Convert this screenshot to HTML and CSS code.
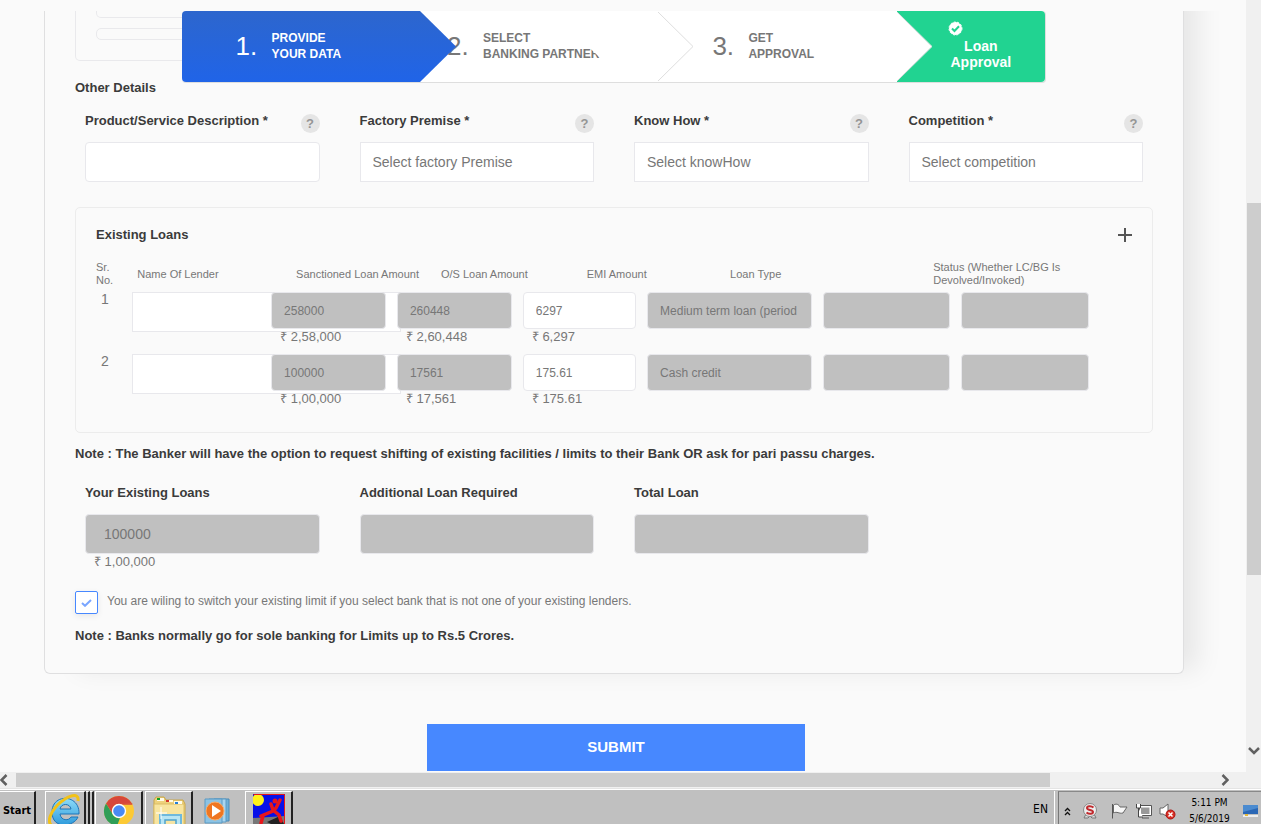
FILE: index.html
```html
<!DOCTYPE html>
<html lang="en">
<head>
<meta charset="utf-8">
<title>Loan Application</title>
<link rel="stylesheet" href="styles.css">
</head>
<body>
<div class="viewport">
  <main class="page">
    <form class="content">
      <div class="card">
        <ol class="stepper">
          <li class="step step-active">
            <span class="step-num">1.</span><span class="step-text">PROVIDE<br>YOUR DATA</span>
            <svg class="arrow" viewBox="0 0 36 71" preserveAspectRatio="none"><defs><linearGradient id="blue" x1="0" y1="0" x2="0" y2="1"><stop offset="0" stop-color="#2d66cd"/><stop offset="1" stop-color="#2064e8"/></linearGradient></defs><path d="M0 0L36 35.500L0 71Z" fill="url(#blue)"/></svg>
          </li>
          <li class="step step-second">
            <span class="step-num">2.</span><span class="step-text clipped">SELECT<br>BANKING PARTNERS</span>
            <svg class="arrow" viewBox="0 0 36 71" preserveAspectRatio="none"><path d="M-1 0L35 35.500L-1 71" fill="#fff" stroke="#dedede"/></svg>
          </li>
          <li class="step step-third">
            <span class="step-num">3.</span><span class="step-text">GET<br>APPROVAL</span>
            <svg class="arrow" viewBox="0 0 36 71" preserveAspectRatio="none"><path d="M-1 0L35 35.500L-1 71" fill="#fff" stroke="#dcdcdc"/></svg>
          </li>
          <li class="step-final">
            <svg class="done" width="15" height="15" viewBox="0 0 15 15"><circle cx="7.500" cy="7.500" r="6.500" fill="#fff" stroke="#fff" stroke-dasharray="2 1.500"/><path d="M4 7.500L6.500 10L11 5.300" fill="none" stroke="#21d391" stroke-width="2"/></svg>
            <span>Loan<br>Approval</span>
          </li>
        </ol>

        <div class="previous"><div class="prev-box prev-first"></div><div class="prev-box"></div></div>
        <h2 class="heading other">Other Details</h2>

        <div class="fields">
          <div class="field">
            <div class="field-head"><label for="product">Product/Service Description *</label><button type="button" class="help" aria-label="Help">?</button></div>
            <input id="product" class="control rounded" type="text">
          </div>
          <div class="field">
            <div class="field-head"><label for="premise">Factory Premise *</label><button type="button" class="help" aria-label="Help">?</button></div>
            <select id="premise" class="control"><option>Select factory Premise</option></select>
          </div>
          <div class="field">
            <div class="field-head"><label for="knowhow">Know How *</label><button type="button" class="help" aria-label="Help">?</button></div>
            <select id="knowhow" class="control"><option>Select knowHow</option></select>
          </div>
          <div class="field">
            <div class="field-head"><label for="competition">Competition *</label><button type="button" class="help" aria-label="Help">?</button></div>
            <select id="competition" class="control"><option>Select competition</option></select>
          </div>
        </div>

        <section class="loans">
          <div class="loans-head">
            <h2 class="heading">Existing Loans</h2>
            <button type="button" class="add" aria-label="Add loan"><svg width="14" height="14" viewBox="0 0 14 14"><path d="M7 0V14M0 7H14" stroke="#555" stroke-width="2"/></svg></button>
          </div>
          <table class="loan-table">
            <colgroup><col class="c-sr"><col class="c-lender"><col class="c-sanction"><col class="c-os"><col class="c-emi"><col class="c-type"><col class="c-status"><col></colgroup>
            <thead>
              <tr><th>Sr.<br>No.</th><th class="h-lender">Name Of Lender</th><th class="h-sanction">Sanctioned Loan Amount</th><th class="h-os">O/S Loan Amount</th><th class="h-emi">EMI Amount</th><th class="h-type">Loan Type</th><th class="h-status" colspan="2">Status (Whether LC/BG Is<br>Devolved/Invoked)</th></tr>
            </thead>
            <tbody>
              <tr>
                <td class="sr">1</td>
                <td><select class="control lender" aria-label="Name of lender 1"><option></option></select></td>
                <td><input class="cell" disabled aria-label="Sanctioned amount 1" value="258000"><span class="amount">₹ 2,58,000</span></td>
                <td><input class="cell" disabled aria-label="Outstanding amount 1" value="260448"><span class="amount">₹ 2,60,448</span></td>
                <td><input class="cell" aria-label="EMI amount 1" value="6297"><span class="amount">₹ 6,297</span></td>
                <td><input class="cell" disabled aria-label="Loan type 1" value="Medium term loan (period"></td>
                <td><input class="cell" disabled aria-label="Instrument 1"></td>
                <td><input class="cell last" disabled aria-label="Status 1"></td>
              </tr>
              <tr>
                <td class="sr">2</td>
                <td><select class="control lender" aria-label="Name of lender 2"><option></option></select></td>
                <td><input class="cell" disabled aria-label="Sanctioned amount 2" value="100000"><span class="amount">₹ 1,00,000</span></td>
                <td><input class="cell" disabled aria-label="Outstanding amount 2" value="17561"><span class="amount">₹ 17,561</span></td>
                <td><input class="cell" aria-label="EMI amount 2" value="175.61"><span class="amount">₹ 175.61</span></td>
                <td><input class="cell" disabled aria-label="Loan type 2" value="Cash credit"></td>
                <td><input class="cell" disabled aria-label="Instrument 2"></td>
                <td><input class="cell last" disabled aria-label="Status 2"></td>
              </tr>
            </tbody>
          </table>
        </section>

        <p class="heading note">Note : The Banker will have the option to request shifting of existing facilities / limits to their Bank OR ask for pari passu charges.</p>

        <div class="fields totals">
          <div class="field">
            <div class="field-head"><label for="existing">Your Existing Loans</label></div>
            <input id="existing" class="control rounded total" disabled value="100000">
            <span class="amount">₹ 1,00,000</span>
          </div>
          <div class="field">
            <div class="field-head"><label for="additional">Additional Loan Required</label></div>
            <input id="additional" class="control rounded total" disabled>
          </div>
          <div class="field">
            <div class="field-head"><label for="total">Total Loan</label></div>
            <input id="total" class="control rounded total" disabled>
          </div>
        </div>

        <div class="switch-row">
          <span class="tick"><input type="checkbox" id="switch" checked><svg width="11" height="8" viewBox="0 0 11 8"><path d="M1 4L4 6.800L10 1" fill="none" stroke="#7aa6ff" stroke-width="2"/></svg></span>
          <label for="switch">You are wiling to switch your existing limit if you select bank that is not one of your existing lenders.</label>
        </div>
        <p class="heading sole">Note : Banks normally go for sole banking for Limits up to Rs.5 Crores.</p>
      </div>
      <div class="actions"><button type="submit" class="submit">SUBMIT</button></div>
    </form>
  </main>
  <div class="vscroll">
    <div class="vthumb"></div>
    <svg width="12" height="8" viewBox="0 0 12 8"><path d="M1 1L6 6L11 1" fill="none" stroke="#606060" stroke-width="2.500"/></svg>
  </div>
</div>
<div class="hscroll">
  <svg width="8" height="12" viewBox="0 0 8 12"><path d="M6.500 1L1.500 6L6.500 11" fill="none" stroke="#606060" stroke-width="2.500"/></svg>
  <div class="hthumb"></div>
  <svg class="right" width="8" height="12" viewBox="0 0 8 12"><path d="M1.500 1L6.500 6L1.500 11" fill="none" stroke="#606060" stroke-width="2.500"/></svg>
</div>
<footer class="taskbar">
  <button class="task start">Start</button>
  <button class="task ie" aria-label="Internet Explorer"><svg width="34" height="34" viewBox="0 0 34 34"><defs><linearGradient id="ieg" x1="0" y1="0" x2="0" y2="1"><stop offset="0" stop-color="#8fdcf8"/><stop offset="1" stop-color="#2e9bdc"/></linearGradient></defs><path d="M31 21H12C13 28 21 28 23 24H30C26 34 4 37 4 19C4 0 32 1 31 21ZM12 16H23C22 10 13 10 12 16Z" fill="url(#ieg)" stroke="#1c74b8"/><path d="M3 32C-2 26 6 13 17 6C25 1 31 1 30 8" fill="none" stroke="#f2c218" stroke-width="3"/></svg></button>
  <span class="stack"></span><span class="stack"></span>
  <button class="task chrome" aria-label="Chrome"><svg width="32" height="32" viewBox="0 0 32 32"><circle cx="16" cy="16" r="15" fill="#fcc934"/><path d="M3 8.500A15 15 0 0 1 29 8.500L16 9A7 7 0 0 0 9.900 19.500Z" fill="#d7473a"/><path d="M3 8.500L9.900 19.500A7 7 0 0 0 17 23L14 31A15 15 0 0 1 3 8.500Z" fill="#2f9e57"/><path d="M16 9H29.300" stroke="#d7473a" stroke-width="1.500"/><circle cx="16" cy="16" r="7.200" fill="#fff"/><circle cx="16" cy="16" r="5.800" fill="#4a8af4"/></svg></button>
  <button class="task folder" aria-label="Explorer"><svg width="34" height="32" viewBox="0 0 34 32"><path d="M2 5L4 2H12L14 5H31L33 9V32H2Z" fill="#eed27c" stroke="#c9a64b"/><path d="M2 9H32V32H2Z" fill="#f8e5a0" stroke="#dcbd65"/><path d="M5 3H12V6H5Z M14 5H21V7H14Z M22 6H30V9H22Z" fill="#fffbe8"/><path d="M5 3H8V5H5Z" fill="#13a327"/><path d="M14 5H17V7H14Z" fill="#d2372a"/><path d="M23 7H26V9H23Z" fill="#2580d7"/><path d="M8 32V20H29V32" fill="#b8e5f4" stroke="#6fb9dd" stroke-width="2"/><path d="M13 32V25H24V32" fill="#f6e4a4" stroke="#4fa3cc" stroke-width="1.500"/><path d="M9 12V24M4 18H15" stroke="#fff"/></svg></button>
  <button class="plain" aria-label="Media Player"><svg width="30" height="28" viewBox="0 0 30 28"><path d="M10 2H25V24H10Z" fill="#6fb0d7" stroke="#4c8ab5"/><path d="M5 2H22V25H5Z" fill="#a9d5ef" stroke="#5b9ac4"/><path d="M1 2H18V26H1Z" fill="#8cc3e4" stroke="#5b9ac4"/><circle cx="11" cy="14" r="9" fill="#ef7622" stroke="#f9ad6b"/><path d="M8 8L17 14L8 20Z" fill="#fff"/></svg></button>
  <button class="task app" aria-label="Application"><svg width="32" height="32" viewBox="0 0 32 32"><path d="M0 0H32V32H0Z" fill="#0710e8"/><path d="M0 24L32 22V32H0Z" fill="#777"/><path d="M14 28L27 22L31 30L22 32Z" fill="#222"/><circle cx="5" cy="6" r="6" fill="#fff21a"/><circle cx="22" cy="7" r="2.500" fill="#e9151b"/><path d="M27 6L23 14L20 17L8 22M18 10L20 16L26 21L28 27M10 22L8 29" fill="none" stroke="#e9151b" stroke-width="3.500" stroke-linecap="round"/><path d="M.500 .500H31.500V32" fill="none" stroke="#e9151b"/></svg></button>
  <span class="lang">EN</span>
  <div class="tray">
    <svg class="t-chev" width="7" height="9" viewBox="0 0 7 9"><path d="M1 4L3.500 1.500L6 4M1 8L3.500 5.500L6 8" fill="none" stroke="#111" stroke-width="1.300"/></svg>
    <svg class="t-s" width="16" height="17" viewBox="0 0 16 17"><path d="M4 11L2 15H6L8 13L10 15H14L12 11" fill="#ddd" stroke="#777"/><circle cx="8" cy="7" r="6.500" fill="#eee" stroke="#888"/><path d="M11.500 4.500C9 2.500 5 3 5 5C5 7.500 11 6.500 11 9C11 11 7 11.500 4.500 9.500" fill="none" stroke="#c02a2e" stroke-width="2"/></svg>
    <svg class="t-flag" width="17" height="16" viewBox="0 0 17 16"><path d="M1.500 1V15.500" stroke="#555"/><path d="M2.500 2C6 0 8 2 9 4H16L12 10C8 11 6 8 2.500 10Z" fill="#f7f7f7" stroke="#666"/></svg>
    <svg class="t-net" width="17" height="16" viewBox="0 0 17 16"><path d="M5 3.500H15.500V12H5Z" fill="#999" stroke="#fff" stroke-width="2"/><path d="M4.500 2.500H16.500V12.500H4.500ZM7 15H14" fill="none" stroke="#555"/><path d="M1.500 1V5H5.500V1M3.500 5V14H8" fill="#fff" stroke="#444"/></svg>
    <svg class="t-vol" width="17" height="17" viewBox="0 0 17 17"><path d="M1 5H4L9 1V14L4 11H1Z" fill="#fff" stroke="#666"/><circle cx="11.500" cy="11.500" r="4.500" fill="#d93025" stroke="#a11"/><path d="M9.500 9.500L13.500 13.500M13.500 9.500L9.500 13.500" stroke="#fff" stroke-width="1.500"/></svg>
    <div class="clock">5:11 PM<br>5/6/2019</div>
    <svg class="t-desk" width="15" height="14" viewBox="0 0 15 14"><path d="M0 1H15V10H0Z" fill="#2a67b5"/><path d="M0 1H15V4L0 8Z" fill="#4b8bd0"/><path d="M0 11H15V13H0Z" fill="#eee"/><path d="M2 10H5V12H2Z" fill="#e3b93c"/></svg>
  </div>
</footer>
</body>
</html>
```

FILE: styles.css
```css
* { box-sizing: border-box; }

body {
  margin: 0;
  height: 100vh;
  display: flex;
  flex-direction: column;
  overflow: hidden;
  background: #fafafa;
  color: #777;
  font-family: "Liberation Sans", Arial, sans-serif;
  font-size: 13px;
}

button, input, select { font-family: inherit; margin: 0; }
button { padding: 0; border: 0; background: none; }

.viewport { flex: 1; min-height: 0; display: flex; }

.page { flex: 1; min-width: 0; padding-top: 11px; overflow: hidden; }

.content { display: flow-root; padding: 0 62px 0 44px; clip-path: inset(0); height: 100%; }

/* The card's upper part is scrolled out of view */
.card {
  position: relative;
  margin-top: -40px;
  padding: 40px 30px 28px;
  border: 1px solid #dfdfe0;
  border-top: 0;
  border-radius: 0 0 6px 6px;
  background: #fafafa;
  box-shadow: 24px 6px 24px -10px rgba(0, 0, 0, .08);
}

.heading { margin: 0; height: 20px; color: #3b3b3b; font-size: 13px; font-weight: bold; line-height: 22px; }

/* Progress steps, floating over the scrolled form */
.stepper {
  position: absolute;
  z-index: 5;
  top: 40px;
  left: 0;
  right: 0;
  width: 76%;
  height: 72px;
  margin: 0 auto;
  padding: 0;
  display: flex;
  list-style: none;
  background: #fff;
  border: 1px solid #dedede;
  border-top: 0;
  border-left: 0;
  border-radius: 4px;
}

.step {
  position: relative;
  flex: none;
  width: 27.6%;
  display: flex;
  align-items: center;
  padding: 0 0 2px 54px;
  z-index: 1;
  background: #fff;
}

.step-active {
  z-index: 4;
  background: linear-gradient(#2d66cd, #2064e8);
  color: #fff;
  border-radius: 4px 0 0 4px;
}

.step-second { z-index: 3; padding-left: 27px; }
.step-third { z-index: 2; }
.step-num { width: 36px; font-size: 26px; line-height: 30px; }
.step-text { font-size: 12px; font-weight: bold; line-height: 16px; white-space: nowrap; }
.clipped { clip-path: polygon(0 0, 100px 0, 104px 16px, 120px 31px, 120px 32px, 0 32px); }
.arrow { position: absolute; left: 100%; top: 0; width: 36px; height: 100%; }

.step-final {
  flex: 1;
  padding: 10px 0 0 48px;
  background: #21d391;
  border-radius: 0 4px 4px 0;
  color: #fff;
  font-size: 14px;
  font-weight: bold;
  line-height: 16px;
}

.step-final span { display: block; width: 72px; margin-top: 2px; text-align: center; }
.done { display: block; margin-left: 3px; }

/* End of the section above */
.previous { width: 50%; height: 50px; padding: 0 20px; border: 1px solid #e9e9ec; border-top: 0; border-radius: 0 0 5px 5px; }
.prev-box { height: 12px; border: 1px solid #e9e9ec; border-radius: 5px; margin-bottom: 10px; }
.prev-first { height: 7px; border-top: 0; border-radius: 0 0 5px 5px; }
.other { margin-top: 16px; }

.fields { display: grid; grid-template-columns: repeat(4, 1fr); margin: 13px -10px 0; }
.field { padding: 0 20px; min-width: 0; }
.field-head { height: 20px; margin-bottom: 12px; display: flex; justify-content: space-between; color: #3b3b3b; font-weight: bold; line-height: 22px; }

.help {
  width: 19px;
  height: 19px;
  margin-top: 4px;
  border-radius: 50%;
  background: #e5e5e5;
  color: #959595;
  font-size: 13px;
  font-weight: bold;
  line-height: 19px;
}

.control {
  display: block;
  width: 100%;
  height: 40px;
  padding: 0 12px;
  border: 1px solid #e8e8ec;
  border-radius: 0;
  background: #fff;
  color: #777;
  font-size: 14px;
  appearance: none;
}

.rounded { border-radius: 4px; }
.total { padding: 0 18px; }
.control:disabled, .cell:disabled { background: #c0c0c0; color: #777; opacity: 1; }

.loans { margin-top: 25px; padding: 16px 20px; border: 1px solid #ececec; border-radius: 5px; }
.loans-head { display: flex; justify-content: space-between; align-items: center; height: 20px; }
.add { height: 14px; margin-top: 2px; line-height: 0; }

.loan-table { width: 100%; margin-top: 17px; border-collapse: collapse; table-layout: fixed; }
.c-sr { width: 3.5%; }
.c-lender { width: 13.4%; }
.c-sanction, .c-os { width: 12.15%; }
.c-emi { width: 12%; }
.c-type { width: 17%; }
.c-status { width: 13.3%; }

th { padding: 0 0 5px; font-size: 11px; font-weight: normal; line-height: 13px; text-align: left; white-space: nowrap; }
.h-lender { padding-left: 5px; }
.h-sanction { padding-left: 25px; }
.h-os { padding-left: 44px; }
.h-emi { padding-left: 64px; }
.h-type { padding-left: 83px; }
.h-status { padding-left: 110px; }

td { height: 62px; padding: 0 11px 0 0; vertical-align: top; }
td:last-child { padding: 0; }
.sr { padding-left: 5px; font-size: 14px; line-height: 14px; }

.lender { position: relative; z-index: 1; width: 210%; }

.cell {
  position: relative;
  z-index: 2;
  display: block;
  width: 100%;
  height: 37px;
  padding: 0 12px;
  border: 1px solid #e8e8ec;
  border-radius: 4px;
  background: #fff;
  color: #777;
  font-size: 12px;
}

.last { width: 75%; }
.amount { display: block; padding-left: 9px; line-height: 16px; white-space: nowrap; }

.note { margin-top: 10px; }
.totals { margin-top: 19px; height: 88px; }

.switch-row { display: flex; gap: 9px; margin-top: 21px; font-size: 12px; line-height: 20px; }
.tick { position: relative; width: 23px; height: 23px; }
.tick input { display: block; width: 100%; height: 100%; appearance: none; border: 1px solid #4788ff; border-radius: 2px; background: #fff; box-shadow: 0 2px 6px rgba(0, 0, 0, .08); }
.tick svg { position: absolute; left: 6px; top: 8px; }
.sole { margin-top: 11px; }

.actions { display: flex; justify-content: center; margin-top: 50px; padding-left: 4px; }
.submit { width: 378px; height: 47px; padding-bottom: 2px; background: #4788ff; color: #fff; font-size: 15px; font-weight: bold; }

/* Scroll bars */
.vscroll { width: 15px; padding-left: 1px; display: flex; flex-direction: column; align-items: center; background: #f0f0f0; }
.vthumb { width: 100%; height: 372px; margin-top: 203px; background: #cdcdcd; }
.vscroll svg { margin: auto 0 17px; }

.hscroll { height: 16px; display: flex; align-items: center; background: #f0f0f0; }
.hthumb { width: 82%; height: 14px; margin-left: 8px; background: #cdcdcd; }
.hscroll .right { margin: 0 32px 0 auto; }

/* Taskbar */
.taskbar {
  height: 36px;
  padding-top: 3px;
  display: flex;
  align-items: stretch;
  background: linear-gradient(#e4e4e4 0 1px, #fff 1px 2px, #c0c0c0 2px);
  color: #000;
  overflow: hidden;
}

.task { display: flex; justify-content: center; padding-top: 3px; border-right: 2px solid #222; border-left: 1px solid #fff; border-top: 1px solid #fff; }
.task svg, .plain svg { flex: none; }
.start { width: 36px; margin-right: 9px; padding-top: 12px; border-left: 0; font-family: "DejaVu Sans Condensed", "DejaVu Sans", sans-serif; font-size: 11px; font-weight: bold; }
.ie { width: 41px; padding-top: 1px; }
.stack { width: 4px; border-right: 2px solid #222; border-top: 1px solid #fff; }
.chrome { width: 48px; margin-left: 1px; }
.folder { width: 48px; margin: 0 11px 0 2px; }
.plain { display: flex; padding-top: 6px; width: 30px; margin-right: 11px; }
.app { width: 48px; padding-top: 2px; }

.lang { margin: 10px 10px 0 auto; font-family: "DejaVu Sans Condensed", "DejaVu Sans", sans-serif; font-size: 12px; line-height: 16px; }

.tray {
  display: flex;
  align-items: center;
  width: 203px;
  padding: 6px 3px 0 5px;
  border-left: 1px solid #777;
  border-top: 1px solid #888;
  box-shadow: -3px 0 #c0c0c0, -4px 0 #fff;
}

.t-s { margin-left: 11px; }
.t-flag { margin-left: 13px; }
.t-net { margin-left: 7px; }
.t-vol { margin-left: 7px; }
.t-desk { margin-left: auto; flex: none; }
.clock { margin-left: auto; font-family: "DejaVu Sans Condensed", "DejaVu Sans", sans-serif; font-size: 10px; line-height: 16px; text-align: center; white-space: nowrap; }
```
